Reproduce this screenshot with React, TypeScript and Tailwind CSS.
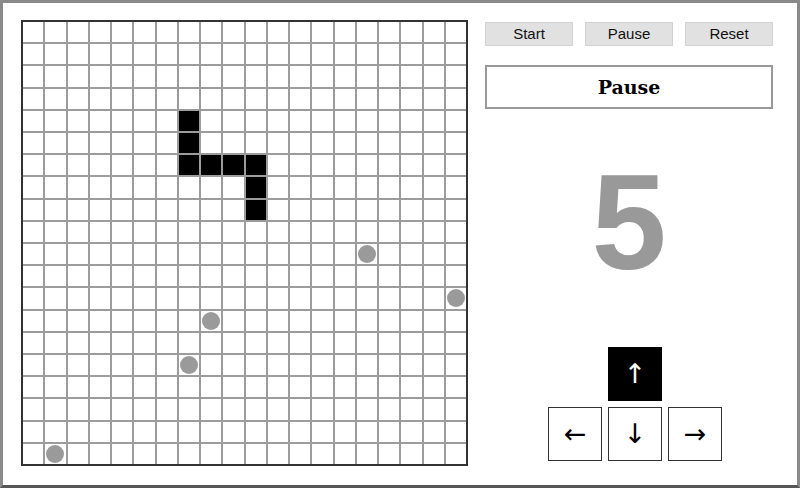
import React from 'react'

const SIZE = 20
const snake = [[7, 4], [7, 5], [7, 6], [8, 6], [9, 6], [10, 6], [10, 7], [10, 8]]
const food = [[15, 10], [19, 12], [8, 13], [7, 15], [1, 19]]

const has = (list: number[][], c: number, r: number) => list.some(([x, y]) => x === c && y === r)

function Board() {
  const cells = []
  for (let r = 0; r < SIZE; r++) {
    for (let c = 0; c < SIZE; c++) {
      const isSnake = has(snake, c, r)
      const isFood = has(food, c, r)
      cells.push(
        <div key={`${c}-${r}`} className={`flex items-center justify-center ${isSnake ? 'bg-black' : 'bg-white'}`}>
          {isFood && <div className="w-[18px] h-[18px] rounded-full bg-[#9a9a9a]" />}
        </div>
      )
    }
  }
  return (
    <div className="w-[447px] h-[446px] shrink-0 border-2 border-[#333] bg-[#9c9c9c] grid grid-cols-[repeat(20,1fr)] grid-rows-[repeat(20,1fr)] gap-[2px]">
      {cells}
    </div>
  )
}

export default function App() {
  const btn = 'w-[88px] h-[24px] bg-[#e1e1e1] border border-[#d2d2d2] text-[15px] text-[#111] flex items-center justify-center'
  const arrow = "w-[54px] h-[54px] border border-[#333] flex items-center justify-center text-[27px] font-['DejaVu_Sans',sans-serif]"
  return (
    <div className="w-[800px] h-[488px] bg-white border-[3px] border-[#8a8a8a] border-b-[#555] flex pl-[18px] pt-[17px] font-['Liberation_Sans',sans-serif]">
      <Board />
      <div className="ml-[17px] w-[288px] flex flex-col pt-[2px]">
        <div className="flex justify-between">
          <button className={btn}>Start</button>
          <button className={btn}>Pause</button>
          <button className={btn}>Reset</button>
        </div>
        <div className="mt-[19px] h-[44px] border-2 border-[#999] flex items-center justify-center font-['DejaVu_Serif',serif] font-bold text-[19px] text-black">
          Pause
        </div>
        <div className="mt-[46px] h-[135px] text-[135px] leading-none font-bold text-[#999] text-center">5</div>
        <div className="mt-[57px] ml-[63px] grid grid-cols-[repeat(3,54px)] gap-[6px]">
          <div />
          <div className={`${arrow} bg-black text-white border-black`}>{'\u2191\uFE0E'}</div>
          <div />
          <div className={`${arrow} text-black`}>{'\u2190\uFE0E'}</div>
          <div className={`${arrow} text-black`}>{'\u2193\uFE0E'}</div>
          <div className={`${arrow} text-black`}>{'\u2192\uFE0E'}</div>
        </div>
      </div>
    </div>
  )
}
